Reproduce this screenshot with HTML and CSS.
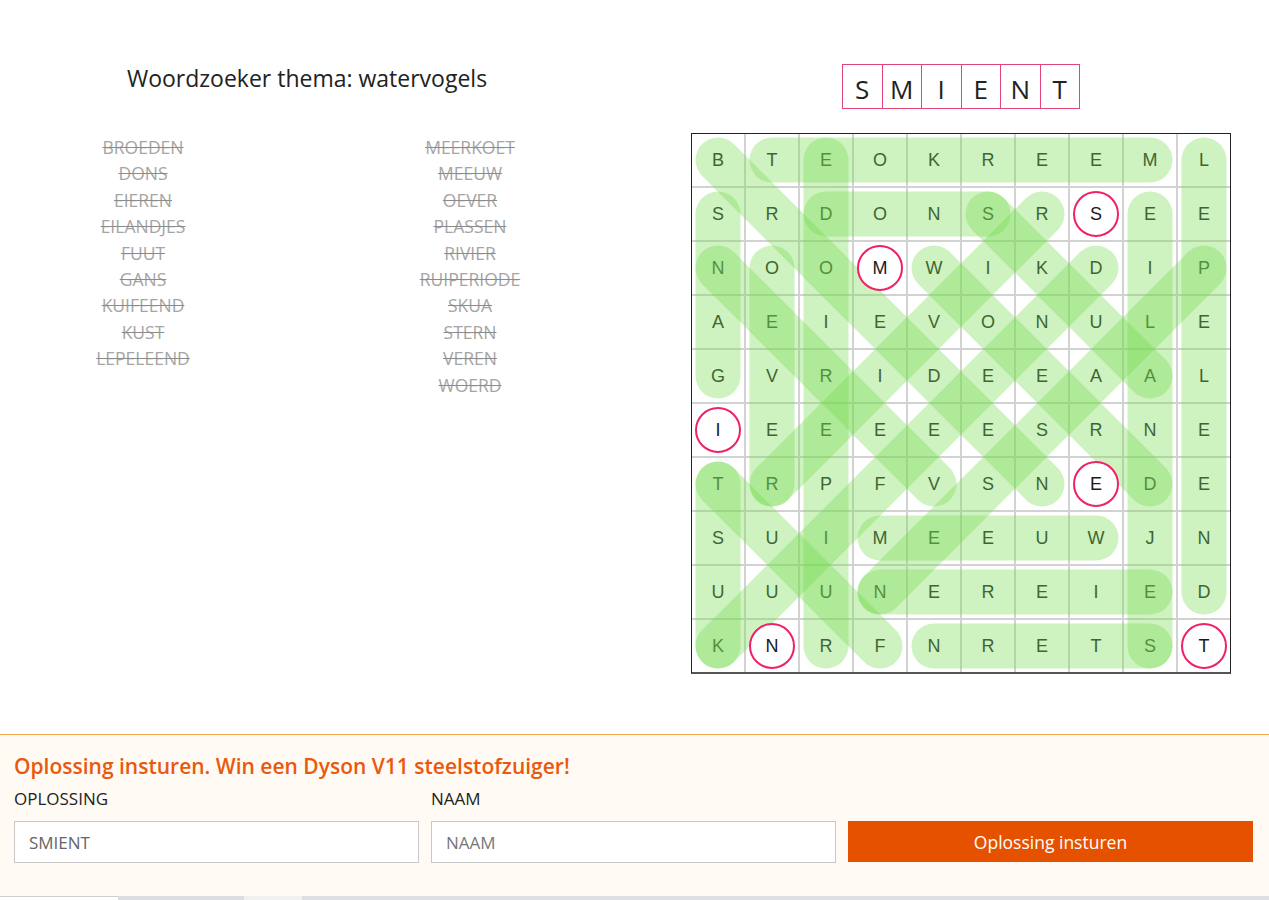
FILE: index.html
```html
<!DOCTYPE html>
<html lang="nl">
<head>
<meta charset="utf-8">
<title>Woordzoeker thema: watervogels</title>
<link rel="stylesheet" href="styles.css">
</head>
<body>
<main class="puzzle">
  <section class="left">
    <h1 class="title">Woordzoeker thema: watervogels</h1>
    <div class="words">
      <ul class="wordcol">
        <li>BROEDEN</li><li>DONS</li><li>EIEREN</li><li>EILANDJES</li><li>FUUT</li><li>GANS</li><li>KUIFEEND</li><li>KUST</li><li>LEPELEEND</li>
      </ul>
      <ul class="wordcol">
        <li>MEERKOET</li><li>MEEUW</li><li>OEVER</li><li>PLASSEN</li><li>RIVIER</li><li>RUIPERIODE</li><li>SKUA</li><li>STERN</li><li>VEREN</li><li>WOERD</li>
      </ul>
    </div>
  </section>
  <section class="right">
    <div class="solution">
      <span class="sbox">S</span><span class="sbox">M</span><span class="sbox">I</span><span class="sbox">E</span><span class="sbox">N</span><span class="sbox">T</span>
    </div>
    <div class="board">
      <div class="cells">
        <span>B</span><span>T</span><span>E</span><span>O</span><span>K</span><span>R</span><span>E</span><span>E</span><span>M</span><span>L</span>
        <span>S</span><span>R</span><span>D</span><span>O</span><span>N</span><span>S</span><span>R</span><span><b class="ring">S</b></span><span>E</span><span>E</span>
        <span>N</span><span>O</span><span>O</span><span><b class="ring">M</b></span><span>W</span><span>I</span><span>K</span><span>D</span><span>I</span><span>P</span>
        <span>A</span><span>E</span><span>I</span><span>E</span><span>V</span><span>O</span><span>N</span><span>U</span><span>L</span><span>E</span>
        <span>G</span><span>V</span><span>R</span><span>I</span><span>D</span><span>E</span><span>E</span><span>A</span><span>A</span><span>L</span>
        <span><b class="ring">I</b></span><span>E</span><span>E</span><span>E</span><span>E</span><span>E</span><span>S</span><span>R</span><span>N</span><span>E</span>
        <span>T</span><span>R</span><span>P</span><span>F</span><span>V</span><span>S</span><span>N</span><span><b class="ring">E</b></span><span>D</span><span>E</span>
        <span>S</span><span>U</span><span>I</span><span>M</span><span>E</span><span>E</span><span>U</span><span>W</span><span>J</span><span>N</span>
        <span>U</span><span>U</span><span>U</span><span>N</span><span>E</span><span>R</span><span>E</span><span>I</span><span>E</span><span>D</span>
        <span>K</span><span><b class="ring">N</b></span><span>R</span><span>F</span><span>N</span><span>R</span><span>E</span><span>T</span><span>S</span><span><b class="ring">T</b></span>
      </div>
      <svg class="marks" width="538" height="538" viewBox="0 0 538 538">
        <g stroke="rgb(120,220,80)" stroke-opacity="0.36" stroke-width="45" stroke-linecap="round" fill="none">
          <line x1="80" y1="26" x2="458" y2="26"/>
          <line x1="134" y1="80" x2="296" y2="80"/>
          <line x1="512" y1="26" x2="512" y2="458"/>
          <line x1="188" y1="404" x2="404" y2="404"/>
          <line x1="188" y1="458" x2="458" y2="458"/>
          <line x1="242" y1="512" x2="458" y2="512"/>
          <line x1="26" y1="80" x2="26" y2="242"/>
          <line x1="458" y1="80" x2="458" y2="512"/>
          <line x1="80" y1="134" x2="80" y2="350"/>
          <line x1="134" y1="26" x2="134" y2="512"/>
          <line x1="26" y1="26" x2="350" y2="350"/>
          <line x1="26" y1="512" x2="404" y2="134"/>
          <line x1="296" y1="80" x2="458" y2="242"/>
          <line x1="26" y1="350" x2="26" y2="512"/>
          <line x1="26" y1="350" x2="188" y2="512"/>
          <line x1="26" y1="134" x2="242" y2="350"/>
          <line x1="350" y1="80" x2="80" y2="350"/>
          <line x1="242" y1="134" x2="458" y2="350"/>
          <line x1="512" y1="134" x2="188" y2="458"/>
        </g>
      </svg>
    </div>
  </section>
</main>
<section class="submit">
  <h2 class="submit-title">Oplossing insturen. Win een Dyson V11 steelstofzuiger!</h2>
  <form class="form">
    <label class="field"><span class="label">OPLOSSING</span><input class="input" type="text" value="SMIENT"></label>
    <label class="field"><span class="label">NAAM</span><input class="input" type="text" placeholder="NAAM"></label>
    <div class="field"><span class="label">&nbsp;</span><button class="btn" type="button">Oplossing insturen</button></div>
  </form>
</section>
<nav class="tabs">
  <span class="tab t1"></span><span class="tab t2"></span><span class="tab t3"></span><span class="tab t4"></span>
</nav>
</body>
</html>
```

FILE: styles.css
```css
html, body {
  margin: 0;
  padding: 0;
  background: #fff;
  font-family: "Open Sans", "Noto Sans", sans-serif;
  color: #222;
}
body {
  width: 1269px;
  height: 900px;
  overflow: hidden;
}
.puzzle {
  display: flex;
  padding-top: 64px;
  height: 670px;
}
.left {
  width: 614px;
  flex: none;
}
.title {
  margin: -1px 0 0 15px;
  width: 584px;
  text-align: center;
  font-weight: 400;
  font-size: 23px;
  line-height: 30px;
  color: #222;
}
.words {
  display: flex;
  gap: 71px;
  padding-left: 15px;
  margin-top: 41px;
}
.wordcol {
  list-style: none;
  margin: 0;
  padding: 0;
  width: 256px;
  text-align: center;
}
.wordcol li {
  font-size: 17.5px;
  line-height: 26.4px;
  color: #a5a5a5;
  text-decoration: line-through;
  text-decoration-color: #8c8c8c;
}
.right {
  margin-left: 77px;
  width: 540px;
  flex: none;
  display: flex;
  flex-direction: column;
  align-items: center;
}
.solution {
  display: flex;
  height: 45px;
  padding-left: 1px;
}
.sbox {
  width: 40.5px;
  height: 45px;
  box-sizing: border-box;
  margin-left: -1px;
  border: 1px solid #e0447a;
  display: flex;
  align-items: flex-end;
  justify-content: center;
  font-size: 26px;
  line-height: 38px;
  color: #222;
}
.board {
  position: relative;
  margin-top: 24px;
  width: 538px;
  height: 538px;
  border: 1px solid #222;
  border-bottom: 2px solid #555;
  background: #d2d2d2;
}
.cells {
  display: grid;
  grid-template-columns: repeat(10, 52px);
  grid-template-rows: repeat(10, 52px);
  gap: 2px;
}
.cells span {
  background: #fff;
  display: flex;
  align-items: center;
  justify-content: center;
  font-family: "Liberation Sans", Arial, sans-serif;
  font-size: 18px;
  color: #222;
}
.ring {
  position: relative;
  z-index: 2;
  width: 42px;
  height: 42px;
  border: 2px solid #f0206a;
  border-radius: 50%;
  background: #fff;
  display: flex;
  align-items: center;
  justify-content: center;
  font-weight: 400;
  color: #1a1a1a;
}
.marks {
  position: absolute;
  top: 0;
  left: 0;
  z-index: 1;
  pointer-events: none;
}
.submit {
  border-top: 1px solid #f6a84c;
  background: #fffaf3;
  padding: 14px 16px 33px 14px;
  height: 114px;
  box-sizing: content-box;
}
.submit-title {
  margin: 0;
  font-size: 21px;
  font-weight: 600;
  line-height: 34px;
  color: #e8590c;
}
.form {
  display: grid;
  grid-template-columns: repeat(3, 405px);
  gap: 12px;
  margin-top: 5px;
}
.field {
  display: flex;
  flex-direction: column;
}
.label {
  font-size: 17px;
  line-height: 22px;
  color: #222;
  margin-bottom: 11px;
}
.input {
  height: 42px;
  box-sizing: border-box;
  border: 1px solid #c8c8c8;
  background: #fff;
  padding: 0 14px;
  font-family: "Open Sans", sans-serif;
  font-size: 17px;
  color: #666;
  outline: none;
}
.input::placeholder {
  color: #777;
}
.btn {
  height: 41px;
  border: none;
  background: #e65100;
  color: #fff;
  font-family: "Open Sans", sans-serif;
  font-size: 17.5px;
}
.tabs {
  display: flex;
  height: 4px;
}
.tab {
  display: block;
  height: 4px;
}
.t1 { width: 118px; background: #fff; border-top: 1px solid #cfcfcf; box-sizing: border-box; }
.t2 { width: 126px; background: #dcdde0; }
.t3 { width: 58px; background: #f0f0f0; }
.t4 { flex: 1; background: #dcdee2; }
```
